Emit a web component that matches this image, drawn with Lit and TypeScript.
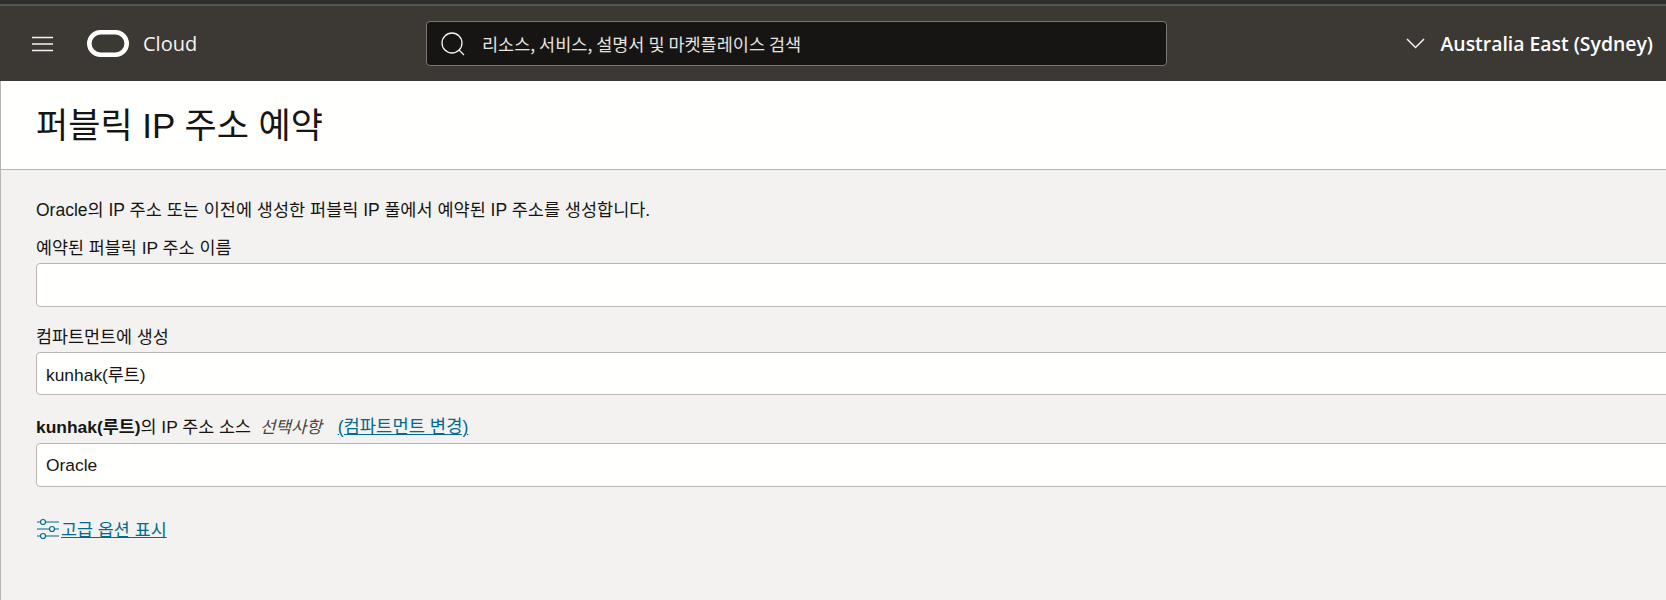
import { LitElement, html, css } from "lit";
import { customElement } from "lit/decorators.js";

@customElement("app-root")
export class AppRoot extends LitElement {
  static styles = css`
    :host { display: block; height: 600px; overflow: hidden; background: #f3f2f1; font-family: "Liberation Sans", "Noto Sans CJK KR", sans-serif; color: #161513; }
    .strip { height: 4px; background: #2d2d2d; }
    .strip2 { height: 2px; background: #57544f; }
    .bar { height: 75px; background: #3c3833; display: flex; align-items: center; color: #fff; }
    .menu { margin-left: 32px; width: 21px; height: 16px; display: block; }
    .logo { margin-left: 34px; width: 42px; height: 27px; display: block; }
    .cloud { margin-left: 14px; width: 283px; font: 500 20px "Open Sans", sans-serif; color: #f5f4f2; }
    .search { width: 741px; height: 45px; box-sizing: border-box; background: #161513; border: 1px solid #7a7672; border-radius: 4px; display: flex; align-items: center; padding-left: 14px; }
    .search svg { width: 24px; height: 24px; margin-right: 17px; }
    .search span { font: 17.5px "Noto Sans CJK KR", sans-serif; color: #e6e4e0; }
    .region { margin-left: auto; margin-right: 13px; display: flex; align-items: center; gap: 16px; font: 600 19.4px "Open Sans", sans-serif; }
    .region svg { width: 19px; height: 11px; }
    .page { border-left: 1px solid #b8b3ac; height: 519px; }
    .title { height: 89px; box-sizing: border-box; background: #fffffd; border-bottom: 1px solid #bcb6b0; padding: 0 0 5px 35px; display: flex; align-items: center; }
    h1 { margin: 0; font-weight: 400; font-size: 35px; }
    .body { padding: 30px 0 0 35px; font-size: 17.4px; }
    .intro { height: 20px; line-height: 20px; margin-bottom: 18px; font-size: 17.5px; }
    .label { height: 20px; line-height: 20px; margin-bottom: 5px; }
    .field { margin-bottom: 20px; }
    .second { margin-bottom: 22px; }
    .second .input { height: 43px; }
    .third .label { margin-bottom: 6px; }
    .third { margin-bottom: 29px; }
    .input { height: 44px; box-sizing: border-box; margin-right: -10px; background: #fffffd; border: 1px solid #bcb6b0; border-radius: 4px; padding-left: 9px; display: flex; align-items: center; font-size: 17.4px; }
    em { margin: 0 11px 0 9px; color: #47433e; font-size: 16.8px; }
    a { color: #006b8f; text-decoration: underline; }
    .third a { font-size: 17.7px; }
    .adv { display: flex; align-items: center; gap: 2px; padding-left: 1px; }
    .adv svg { width: 22px; height: 22px; flex: none; }
  `;
  render() {
    return html`
      <div class="strip"></div><div class="strip2"></div>
      <header class="bar">
        <svg class="menu" viewBox="0 0 21 16" fill="none" stroke="#f5f4f2" stroke-width="1.6"><path d="M0 1.5h21M0 8h21M0 14.5h21"/></svg>
        <svg class="logo" viewBox="0 0 42 27" fill="none" stroke="#fff" stroke-width="4.6"><rect x="2.3" y="2.3" width="37.4" height="22.4" rx="11.2"/></svg>
        <span class="cloud">Cloud</span>
        <div class="search">
          <svg viewBox="0 0 24 24" fill="none" stroke="#f5f4f2" stroke-width="1.3"><circle cx="11" cy="11" r="10"/><path d="M18 18l5 5"/></svg>
          <span>리소스, 서비스, 설명서 및 마켓플레이스 검색</span>
        </div>
        <div class="region">
          <svg viewBox="0 0 19 11" fill="none" stroke="#f5f4f2" stroke-width="1.5"><path d="M1 1l8.5 8.5L18 1"/></svg>
          <span>Australia East (Sydney)</span>
        </div>
      </header>
      <div class="page">
        <div class="title"><h1>퍼블릭 IP 주소 예약</h1></div>
        <div class="body">
          <div class="intro">Oracle의 IP 주소 또는 이전에 생성한 퍼블릭 IP 풀에서 예약된 IP 주소를 생성합니다.</div>
          <div class="field"><div class="label">예약된 퍼블릭 IP 주소 이름</div><div class="input"></div></div>
          <div class="field second"><div class="label">컴파트먼트에 생성</div><div class="input">kunhak(루트)</div></div>
          <div class="field third"><div class="label"><b>kunhak(루트)</b>의 IP 주소 소스<em>선택사항</em> <a href="#">(컴파트먼트 변경)</a></div><div class="input">Oracle</div></div>
          <div class="adv">
            <svg viewBox="0 0 22 22" fill="none" stroke="#006b8f" stroke-width="1.2"><path d="M0 4h3.5M8.5 4H22M0 11h12.5M17.5 11H22M0 18h3.5M8.5 18H22"/><circle cx="6" cy="4" r="2.5"/><circle cx="15" cy="11" r="2.5"/><circle cx="6" cy="18" r="2.5"/></svg>
            <a href="#">고급 옵션 표시</a>
          </div>
        </div>
      </div>
    `;
  }
}
